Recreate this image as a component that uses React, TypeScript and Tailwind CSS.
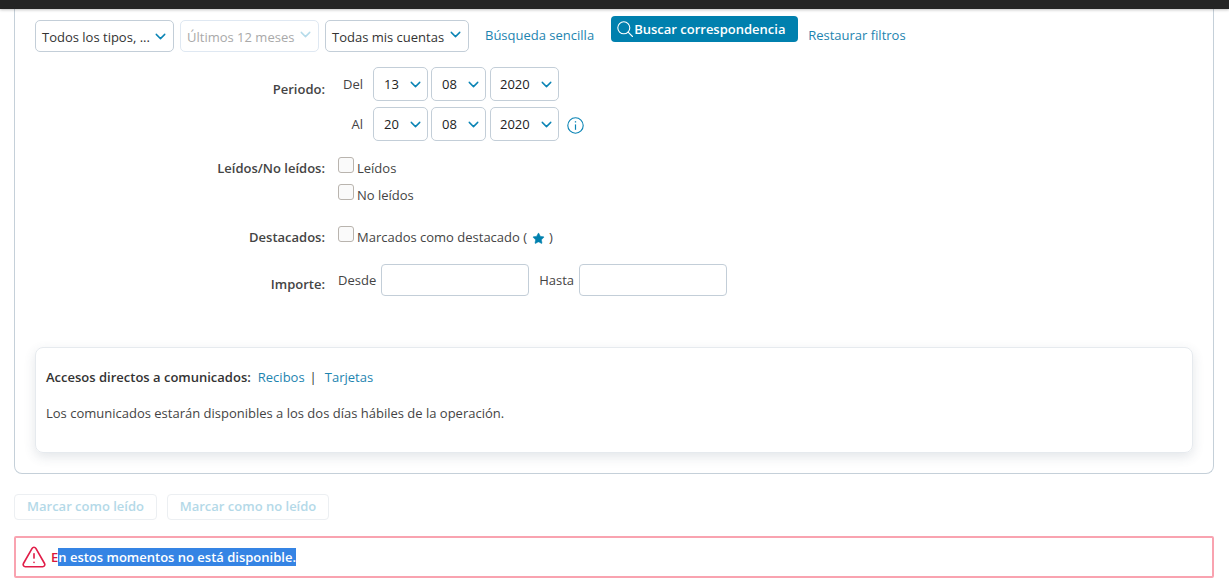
import { ChevronDown, Star, TriangleAlert } from "lucide-react";

type SelectProps = {
  label: string;
  width: string;
  disabled?: boolean;
  chevronClass: string;
};

function FilterSelect({ label, width, disabled, chevronClass }: SelectProps) {
  return (
    <div
      className={`${width} h-[32px] flex items-center justify-between pl-[6px] pr-[4px] rounded-[5px] border ${
        disabled ? "border-[#dfe8f2] text-[#a9a9a9]" : "border-[#c3ced8] text-[#333]"
      }`}
    >
      <span className="text-[13px] whitespace-nowrap mt-[3px]">{label}</span>
      <ChevronDown size={17} strokeWidth={2} className={`${chevronClass} ${disabled ? "text-[#b5dbea]" : "text-[#0a84b5]"}`} />
    </div>
  );
}

function DateSelect({ value, width }: { value: string; width: string }) {
  return (
    <div className={`${width} h-[34px] flex items-center justify-between pl-[10px] pr-[3px] rounded-[5px] border border-[#c3ced8] text-[#222]`}>
      <span className="text-[13px] mt-[1px]">{value}</span>
      <ChevronDown size={17} strokeWidth={2} className="text-[#0a84b5]" />
    </div>
  );
}

function YearSelect() {
  return (
    <div className="w-[69px] h-[34px] flex items-center justify-between pl-[9px] pr-[3px] rounded-[5px] border border-[#c3ced8] text-[#222]">
      <span className="text-[13px] mt-[1px]">2020</span>
      <ChevronDown size={17} strokeWidth={2} className="text-[#0a84b5]" />
    </div>
  );
}

function CheckOption({ label, children }: { label: string; children?: React.ReactNode }) {
  return (
    <div className="flex items-start h-[16px]">
      <span className="w-[16px] h-[16px] rounded-[3px] border border-[#b9b4ae] bg-[#fafafa] shrink-0" />
      <span className="ml-[3px] mt-[3px] text-[13px] leading-[16px] text-[#444] whitespace-nowrap flex items-center">
        {label}
        {children}
      </span>
    </div>
  );
}

function FieldLabel({ children, className }: { children: React.ReactNode; className: string }) {
  return <div className={`w-[290px] shrink-0 text-right text-[13px] leading-[16px] font-semibold text-[#444] ${className}`}>{children}</div>;
}

function SearchGlyph() {
  return (
    <svg width="16" height="16" viewBox="0 0 16 16" fill="none" stroke="currentColor" strokeWidth="1.1" className="mr-[1px] shrink-0">
      <circle cx="6.8" cy="6.8" r="6" />
      <path d="M11.1 11.1 15.5 15.5" strokeLinecap="round" />
    </svg>
  );
}

function InfoGlyph() {
  return (
    <svg width="17" height="17" viewBox="0 0 17 17" fill="none" stroke="#0a84b5" strokeWidth="1.1" className="ml-[8px] mt-[2px] shrink-0">
      <circle cx="8.5" cy="8.5" r="7.7" />
      <path d="M8.5 7.4V12.8" strokeWidth="1.2" />
      <path d="M8.5 4.2V5.5" strokeWidth="1.3" />
    </svg>
  );
}

export default function App() {
  return (
    <div className="h-[586px] overflow-hidden bg-white" style={{ fontFamily: "'Open Sans', sans-serif" }}>
      <div className="h-[9px] bg-[#242424] shadow-[0_1px_3px_rgba(0,0,0,0.25)] relative" />

      <div className="pl-[14px] pr-[15px]">
        <section className="h-[465px] border border-t-0 border-[#c5d0d9] rounded-b-[8px] px-[20px]">
          <div className="flex items-start pt-[11px] h-[58px]">
            <FilterSelect label="Todos los tipos, ..." width="w-[139px]" chevronClass="mt-[1px]" />
            <div className="ml-[6px]">
              <FilterSelect label="Últimos 12 meses" width="w-[139px]" disabled chevronClass="-mt-[4px]" />
            </div>
            <div className="ml-[6px]">
              <FilterSelect label="Todas mis cuentas" width="w-[144px]" chevronClass="-mt-[4px]" />
            </div>
            <a className="ml-[16px] mt-[6px] text-[13px] leading-[18px] text-[#1d84b0] whitespace-nowrap">Búsqueda sencilla</a>
            <button className="ml-[17px] -mt-[4px] w-[187px] h-[26px] flex items-center pl-[6px] rounded-[4px] bg-[#0080ae] text-white text-[13px] font-semibold whitespace-nowrap">
              <SearchGlyph />
              <span className="mt-[1px]">Buscar correspondencia</span>
            </button>
            <a className="ml-[10px] mt-[6px] text-[13px] leading-[18px] text-[#1d84b0] whitespace-nowrap">Restaurar filtros</a>
          </div>

          <div className="flex">
            <FieldLabel className="mt-[14px]">Periodo:</FieldLabel>
            <div className="flex flex-col gap-[6px]">
              <div className="flex items-center">
                <span className="w-[38px] text-right text-[13px] text-[#444] mt-[1px]">Del</span>
                <div className="ml-[10px] flex gap-[3px]">
                  <DateSelect value="13" width="w-[55px]" />
                  <DateSelect value="08" width="w-[55px]" />
                </div>
                <div className="ml-[4px]">
                  <YearSelect />
                </div>
              </div>
              <div className="flex items-center">
                <span className="w-[38px] text-right text-[13px] text-[#444] mt-[1px]">Al</span>
                <div className="ml-[10px] flex gap-[3px]">
                  <DateSelect value="20" width="w-[55px]" />
                  <DateSelect value="08" width="w-[55px]" />
                </div>
                <div className="ml-[4px]">
                  <YearSelect />
                </div>
                <InfoGlyph />
              </div>
            </div>
          </div>

          <div className="flex mt-[16px]">
            <FieldLabel className="mt-[3px]">Leídos/No leídos:</FieldLabel>
            <div className="ml-[13px] flex flex-col gap-[11px]">
              <CheckOption label="Leídos" />
              <CheckOption label="No leídos" />
            </div>
          </div>

          <div className="flex mt-[26px]">
            <FieldLabel className="mt-[3px]">Destacados:</FieldLabel>
            <div className="ml-[13px]">
              <CheckOption label="Marcados como destacado (">
                <Star size={13} fill="#0080ae" strokeWidth={1} className="ml-[5px] mr-[4px] mt-[2px] text-[#0080ae]" />
                )
              </CheckOption>
            </div>
          </div>

          <div className="flex mt-[22px]">
            <FieldLabel className="mt-[9px]">Importe:</FieldLabel>
            <div className="ml-[13px] flex items-center text-[13px] text-[#444] -mt-[3px]">
              <span className="mt-[1px]">Desde</span>
              <div className="ml-[5px] w-[148px] h-[32px] rounded-[4px] border border-[#c3ced8]" />
              <span className="ml-[10px] mt-[1px]">Hasta</span>
              <div className="ml-[5px] w-[148px] h-[32px] rounded-[4px] border border-[#c3ced8]" />
            </div>
          </div>

          <div className="mt-[51px] h-[106px] rounded-[8px] border border-[#e6eaee] shadow-[0_4px_12px_rgba(60,80,100,0.14)] px-[10px] pt-[20px] text-[13px] leading-[18px]">
            <div className="flex">
              <span className="font-semibold text-[#333]">Accesos directos a comunicados:</span>
              <a className="ml-[7px] text-[#1d84b0]">Recibos</a>
              <span className="ml-[5px] mr-[8px] text-[#333]">|</span>
              <a className="text-[#1d84b0]">Tarjetas</a>
            </div>
            <p className="mt-[18px] text-[#444]">Los comunicados estarán disponibles a los dos días hábiles de la operación.</p>
          </div>
        </section>

        <div className="flex gap-[10px] mt-[20px]">
          <button className="w-[143px] h-[26px] rounded-[4px] border border-[#eceff2] text-[13px] font-semibold text-[#b4d9e8] whitespace-nowrap">Marcar como leído</button>
          <button className="w-[162px] h-[26px] rounded-[4px] border border-[#eceff2] text-[13px] font-semibold text-[#b4d9e8] whitespace-nowrap">Marcar como no leído</button>
        </div>

        <div className="mt-[16px] h-[42px] flex items-center border-2 border-[#f9a3b0] rounded-[2px] pl-[5px]">
          <TriangleAlert size={26} strokeWidth={1.5} className="text-[#e11d48] shrink-0" />
          <span className="ml-[4px] text-[13px] font-semibold text-[#d8173c] leading-[18px]">E</span>
          <span className="text-[13px] font-semibold leading-[18px] bg-[#3584e4] text-white whitespace-nowrap">n estos momentos no está disponible.</span>
        </div>
      </div>
    </div>
  );
}
